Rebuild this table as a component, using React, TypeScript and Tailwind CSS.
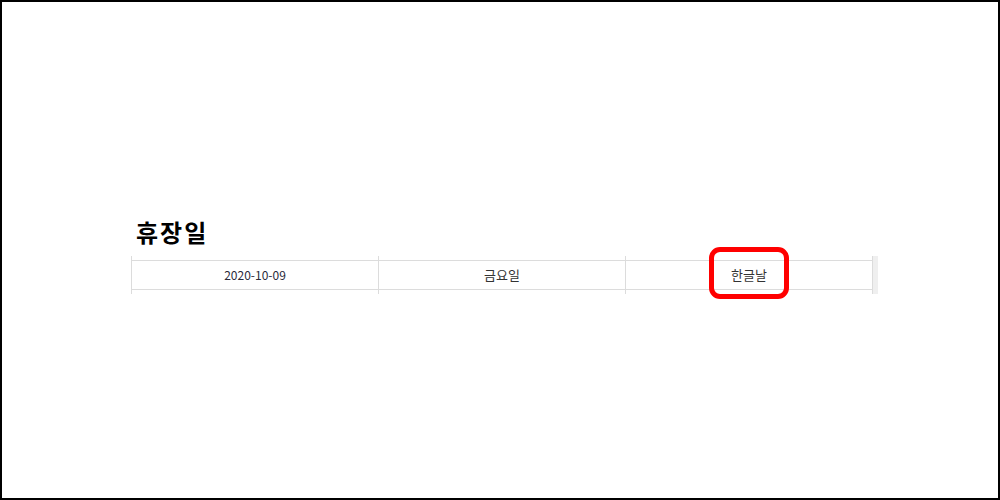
const holidays = [
  { date: '2020-10-09', day: '금요일', name: '한글날' },
];

export default function App() {
  return (
    <div
      className="relative h-[500px] w-[1000px] border-2 border-black bg-white"
      style={{ fontFamily: '"Noto Sans CJK KR", "Noto Sans", sans-serif' }}
    >
      <div className="pl-[129px] pt-[212px]">
        <h2 className="pl-[5px] text-[24px] leading-9 font-bold tracking-[2px] text-black">
          휴장일
        </h2>
        {holidays.map((h) => (
          <div key={h.date} className="mt-[6px] flex">
            {[h.date, h.day, h.name].map((v, i) => (
              <div
                key={i}
                className={
                  i === 2
                    ? 'w-[248px] border-x border-[#dcdcdc] py-[4px]'
                    : 'w-[247px] border-l border-[#dcdcdc] py-[4px]'
                }
              >
                <div className="flex h-[30px] items-center justify-center border-y border-[#dcdcdc] text-[13px] text-[#333]">
                  <span className={i === 0 ? 'text-[12px] text-[#2a2a3a]' : ''}>{v}</span>
                </div>
              </div>
            ))}
            <div className="w-[5px] bg-[#efefef]" />
          </div>
        ))}
      </div>
      <div className="absolute top-[245px] left-[707px] h-[52px] w-[80px] rounded-[11px] border-[5px] border-[#ff0000]" />
    </div>
  );
}
